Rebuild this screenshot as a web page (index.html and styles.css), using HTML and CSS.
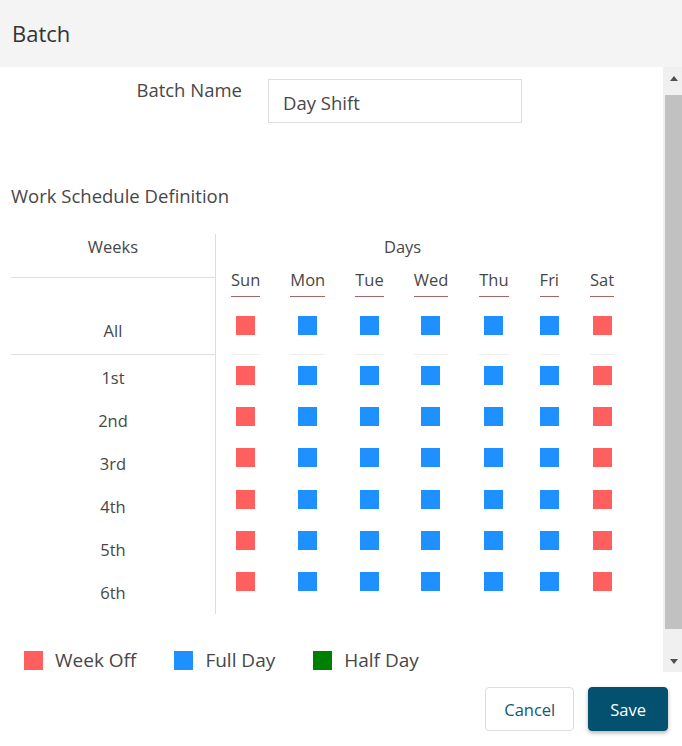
FILE: index.html
```html
<!DOCTYPE html>
<html lang="en">
<head>
    <meta charset="UTF-8">
    <meta name="viewport" content="width=device-width, initial-scale=1.0">
    <title>Batch</title>
    <link rel="stylesheet" href="styles.css">
</head>
<body>
    <div class="header">Batch</div>

    <div class="main">
        <div class="content">
            <div class="form-row">
                <label class="field-label" for="batchName">Batch Name</label>
                <input id="batchName" class="field-input" type="text" value="Day Shift">
            </div>

            <div class="section-title">Work Schedule Definition</div>

            <div class="schedule">
                <div class="weeks">
                    <div class="weeks-title">Weeks</div>
                    <div class="week-all">All</div>
                    <div class="week-list" id="weekList"></div>
                </div>
                <div class="days">
                    <div class="days-title">Days</div>
                    <div class="day-cols" id="dayCols"></div>
                </div>
            </div>

            <div class="legend">
                <div class="legend-item"><span class="mark off"></span>Week Off</div>
                <div class="legend-item"><span class="mark full"></span>Full Day</div>
                <div class="legend-item"><span class="mark half"></span>Half Day</div>
            </div>
        </div>

        <!-- scrollbar -->
        <div class="scrollbar">
            <div class="sb-btn"><span class="sb-arrow up"></span></div>
            <div class="sb-track"><div class="sb-thumb"></div></div>
            <div class="sb-btn"><span class="sb-arrow down"></span></div>
        </div>
    </div>

    <div class="footer">
        <button class="btn btn-cancel" type="button">Cancel</button>
        <button class="btn btn-save" type="button">Save</button>
    </div>

    <script>
        // 주차 / 요일
        const weeks = ['1st', '2nd', '3rd', '4th', '5th', '6th'];
        const days = ['Sun', 'Mon', 'Tue', 'Wed', 'Thu', 'Fri', 'Sat'];
        const offDays = ['Sun', 'Sat'];

        const weekList = document.getElementById('weekList');
        weeks.forEach(w => {
            const row = document.createElement('div');
            row.className = 'week';
            row.textContent = w;
            weekList.appendChild(row);
        });

        const dayCols = document.getElementById('dayCols');
        days.forEach(d => {
            const type = offDays.includes(d) ? 'off' : 'full';
            let html = `<div class="day-name">${d}</div>`;
            html += `<div class="day-all"><span class="mark ${type}"></span></div>`;
            weeks.forEach(() => {
                html += `<div class="day-cell"><span class="mark ${type}"></span></div>`;
            });
            const col = document.createElement('div');
            col.className = 'day-col';
            col.innerHTML = html;
            dayCols.appendChild(col);
        });
    </script>
</body>
</html>
```

FILE: styles.css
```css
* {
    box-sizing: border-box;
}

body {
    margin: 0;
    height: 746px;
    overflow: hidden;
    font-family: 'Segoe UI', 'Open Sans', sans-serif;
    color: #474747;
    background: #fff;
}

.header {
    height: 67px;
    line-height: 67px;
    padding-left: 12px;
    font-size: 22px;
    color: #333;
    background: #f4f4f4;
}

.main {
    display: flex;
    height: 605px;
}

.content {
    flex: 1;
    overflow: hidden;
    padding: 12px 0 0 11px;
}

.scrollbar {
    width: 19px;
    display: flex;
    flex-direction: column;
    background: #f0f0f0;
}

.sb-btn {
    height: 22px;
    display: flex;
    align-items: center;
    justify-content: center;
    padding-left: 2px;
}

.sb-arrow {
    width: 0;
    height: 0;
    border-left: 4.5px solid transparent;
    border-right: 4.5px solid transparent;
}

.sb-arrow.up {
    border-bottom: 5px solid #505050;
}

.sb-arrow.down {
    border-top: 5px solid #505050;
}

.sb-track {
    flex: 1;
    padding: 6px 0 21px 2px;
}

.sb-thumb {
    height: 100%;
    background: #c1c1c1;
}

.form-row {
    display: flex;
    align-items: flex-start;
}

.field-label {
    width: 231px;
    margin: -1px 26px 0 0;
    text-align: right;
    font-size: 18.5px;
    line-height: 24px;
}

.field-input {
    width: 254px;
    height: 44px;
    padding: 10px 14px 7px;
    border: 1px solid #ddd;
    font-family: inherit;
    font-size: 18.5px;
    line-height: 25px;
    color: #474747;
    outline: none;
}

.section-title {
    margin-top: 60px;
    font-size: 18.5px;
    line-height: 25px;
}

.schedule {
    display: flex;
    margin-top: 26px;
    font-size: 16.5px;
}

.weeks {
    width: 205px;
    border-right: 1px solid #ddd;
    text-align: center;
}

.weeks-title {
    padding: 1px 0 18px;
    line-height: 24px;
    border-bottom: 1px solid #ddd;
}

.week-all {
    padding: 41px 0 11px;
    line-height: 24px;
    border-bottom: 1px solid #ddd;
}

.week-list {
    padding-top: 1px;
}

.week {
    height: 43px;
    line-height: 43px;
}

.days {
    padding-left: 15px;
}

.days-title {
    padding: 1px 40px 0 0;
    line-height: 24px;
    text-align: center;
}

.day-cols {
    display: flex;
    gap: 30px;
    margin-top: 9px;
}

.day-col:nth-child(n+5) {
    margin-left: 1px;
}

.day-name {
    padding-bottom: 4px;
    line-height: 24px;
    text-align: center;
    white-space: nowrap;
    border-bottom: 1px solid #a86464;
}

.day-all {
    height: 58px;
    padding-top: 19px;
    border-bottom: 1px solid #eee;
}

.day-cell {
    height: 41.2px;
    padding-top: 11px;
}

.mark {
    display: block;
    width: 19px;
    height: 19px;
    margin: 0 auto;
}

.mark.off {
    background: #ff5f5f;
}

.mark.full {
    background: #1e90ff;
}

.mark.half {
    background: #008000;
}

.legend {
    display: flex;
    gap: 38px;
    margin-top: 34px;
    padding-left: 13px;
    font-size: 19px;
    line-height: 24px;
}

.legend-item {
    display: flex;
    align-items: center;
}

.legend-item .mark {
    margin: 0 12px 0 0;
}

.footer {
    display: flex;
    justify-content: flex-end;
    gap: 14px;
    padding: 15px 14px 0 0;
}

.btn {
    height: 44px;
    padding: 0 18px;
    border-radius: 4px;
    font-family: inherit;
    font-size: 16.5px;
    cursor: pointer;
}

.btn-cancel {
    background: #fff;
    border: 1px solid #ddd;
    color: #0d5a75;
}

.btn-save {
    padding: 0 21px;
    background: #03506f;
    border: 1px solid #03506f;
    color: #fff;
    box-shadow: 0 2px 4px rgba(0, 0, 0, 0.3);
}
```
